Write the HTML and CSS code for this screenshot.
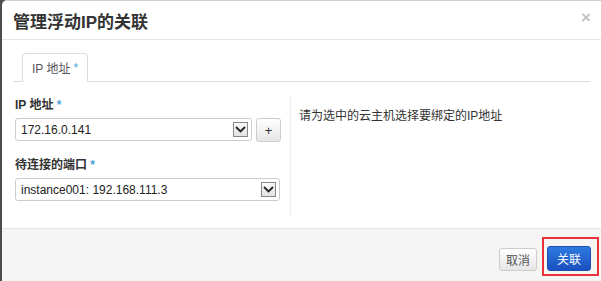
FILE: index.html
```html
<!DOCTYPE html>
<html lang="zh-CN">

<head>
    <meta charset="UTF-8">
    <meta name="viewport" content="width=device-width, initial-scale=1.0">
    <title>管理浮动IP的关联</title>
    <link rel="stylesheet" href="styles.css">
</head>

<body>

    <div class="modal">
        <div class="modal-header">
            <h3>管理浮动IP的关联</h3>
            <span class="close">&times;</span>
        </div>

        <div class="modal-body">
            <ul class="nav-tabs">
                <li class="active">IP 地址 <span class="req">*</span></li>
            </ul>

            <div class="tab-content">
                <div class="left">
                    <label>IP 地址 <span class="req">*</span></label>
                    <div class="input-row">
                        <div class="select">
                            <span>172.16.0.141</span>
                            <span class="arrow">
                                <svg width="11" height="7" viewBox="0 0 11 7"><path d="M1 1l4.5 4.5L10 1" fill="none" stroke="#222" stroke-width="1.8"/></svg>
                            </span>
                        </div>
                        <button class="btn-add">+</button>
                    </div>

                    <label>待连接的端口 <span class="req">*</span></label>
                    <div class="input-row">
                        <div class="select full">
                            <span>instance001: 192.168.111.3</span>
                            <span class="arrow">
                                <svg width="11" height="7" viewBox="0 0 11 7"><path d="M1 1l4.5 4.5L10 1" fill="none" stroke="#222" stroke-width="1.8"/></svg>
                            </span>
                        </div>
                    </div>
                </div>

                <div class="right">
                    <p>请为选中的云主机选择要绑定的IP地址</p>
                </div>
            </div>
        </div>

        <div class="modal-footer">
            <button class="btn">取消</button>
            <span class="highlight">
                <button class="btn btn-primary">关联</button>
            </span>
        </div>
    </div>

</body>

</html>
```

FILE: styles.css
```css
body {
    margin: 0;
    background-color: #4d4d4d;
    font-family: 'Liberation Sans', 'Noto Sans CJK SC', sans-serif;
    font-size: 12px;
    color: #333;
}

.modal {
    margin-left: 2px;
    height: 281px;
    background-color: #fff;
    border-top: 1px solid #d0d0d0;
    border-top-left-radius: 5px;
    display: flex;
    flex-direction: column;
    overflow: hidden;
}

/* Header */
.modal-header {
    height: 38px;
    padding: 0 11px;
    border-bottom: 1px solid #e5e5e5;
    display: flex;
    align-items: center;
    justify-content: space-between;
}

.modal-header h3 {
    margin: 0;
    font-size: 17px;
    font-weight: bold;
    color: #333;
}

.close {
    font-size: 17px;
    font-weight: bold;
    color: #c4c4c4;
    margin-top: -4px;
    margin-right: -1px;
}

/* Body */
.modal-body {
    padding: 13px 11px 0;
    height: 175px;
    border-bottom: 1px solid #e5e5e5;
}

.nav-tabs {
    list-style: none;
    margin: 0;
    padding: 0 0 0 9px;
    border-bottom: 1px solid #ddd;
    display: flex;
}

.nav-tabs li {
    height: 27px;
    padding: 0 9px;
    margin-bottom: -1px;
    border: 1px solid #ddd;
    border-bottom-color: #fff;
    border-radius: 4px 4px 0 0;
    background-color: #fff;
    color: #555;
    display: flex;
    align-items: center;
    gap: 3px;
}

.req {
    color: #4aa3d8;
}

.tab-content {
    display: flex;
    padding-top: 14px;
}

.left {
    width: 266px;
    padding-left: 2px;
    padding-right: 9px;
    border-right: 1px solid #eee;
    height: 120px;
}

label {
    display: block;
    font-weight: bold;
    line-height: 16px;
    margin-top: 1px;
    margin-bottom: 5px;
}

.input-row {
    display: flex;
    gap: 4px;
    margin-bottom: 15px;
}

.select {
    width: 233px;
    height: 21px;
    border: 1px solid #ccc;
    border-radius: 3px;
    padding-left: 5px;
    display: flex;
    align-items: center;
    justify-content: space-between;
    font-size: 12px;
    color: #222;
}

.select.full {
    width: 258px;
}

.select .arrow {
    width: 13px;
    height: 13px;
    margin-right: 3px;
    border: 1px solid #888;
    background: linear-gradient(#fafafa, #e2e2e2);
    display: flex;
    align-items: center;
    justify-content: center;
}

.btn-add {
    width: 25px;
    height: 24px;
    border: 1px solid #ccc;
    border-radius: 3px;
    background: linear-gradient(#fff, #e6e6e6);
    font-family: 'Liberation Sans', sans-serif;
    font-size: 13px;
    color: #333;
    padding: 0;
}

.right {
    padding-left: 8px;
}

.right p {
    margin: 10px 0 0;
    color: #333;
}

/* Footer */
.modal-footer {
    flex: 1;
    background-color: #f5f5f5;
    display: flex;
    justify-content: flex-end;
    align-items: flex-start;
    padding-right: 2px;
    gap: 5px;
}

.btn {
    font-family: 'Liberation Sans', 'Noto Sans CJK SC', sans-serif;
    font-size: 12px;
    height: 23px;
    padding: 0 6px;
    margin-top: 19px;
    border: 1px solid #ccc;
    border-radius: 3px;
    background: linear-gradient(#fff, #e6e6e6);
    color: #555;
}

.highlight {
    margin-top: 8px;
    border: 2px solid #e8333a;
    padding: 7px 6px 3px 3px;
}

.btn-primary {
    margin-top: 0;
    height: 25px;
    padding: 0 9px;
    border-color: #1d4fb0;
    background: linear-gradient(#2e7be0, #1b4fc0);
    color: #fff;
}
```
